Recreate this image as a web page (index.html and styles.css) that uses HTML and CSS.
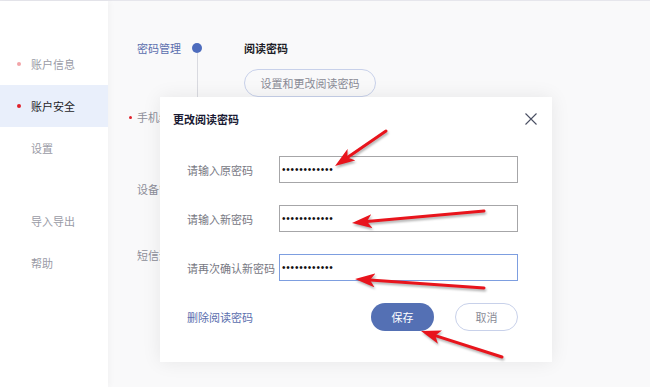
FILE: index.html
```html
<!DOCTYPE html>
<html lang="zh-CN">
  <head>
    <meta charset="UTF-8" />
    <meta name="viewport" content="width=device-width, initial-scale=1.0" />
    <title>账户安全 - 阅读密码</title>
    <link rel="stylesheet" href="styles.css">
  </head>
  <body>
    <div class="app">
      <!-- Left navigation -->
      <aside class="sidebar">
        <ul class="nav">
          <li class="nav-item dotted faint">账户信息</li>
          <li class="nav-item dotted active">账户安全</li>
          <li class="nav-item">设置</li>
          <li class="nav-item group-start">导入导出</li>
          <li class="nav-item">帮助</li>
        </ul>
      </aside>

      <!-- Settings content -->
      <main class="main">
        <div class="section section-password">
          <div class="sec-label primary">密码管理</div>
          <div class="sec-axis"><span class="axis-dot"></span><span class="axis-line"></span></div>
          <div class="sec-body">
            <div class="sec-title">阅读密码</div>
            <button class="btn-outline">设置和更改阅读密码</button>
          </div>
        </div>
        <div class="section section-phone">
          <div class="sec-label"><span class="required"></span>手机绑定</div>
          <div class="sec-axis"><span class="axis-dot"></span><span class="axis-line"></span></div>
          <div class="sec-body"></div>
        </div>
        <div class="section section-device">
          <div class="sec-label">设备管理</div>
          <div class="sec-axis"><span class="axis-dot"></span><span class="axis-line"></span></div>
          <div class="sec-body"></div>
        </div>
        <div class="section section-sms">
          <div class="sec-label">短信通知</div>
          <div class="sec-axis"><span class="axis-dot"></span></div>
          <div class="sec-body"></div>
        </div>

        <!-- Change password dialog -->
        <div class="modal">
          <div class="modal-header">
            <div class="modal-title">更改阅读密码</div>
            <button class="modal-close" aria-label="关闭">
              <svg width="12" height="12" viewBox="0 0 12 12">
                <path d="M0.5 0.5 L11.5 11.5 M11.5 0.5 L0.5 11.5" stroke="#4a4f63" stroke-width="1.1" fill="none"/>
              </svg>
            </button>
          </div>
          <div class="modal-form">
            <div class="form-row">
              <label class="form-label">请输入原密码</label>
              <div class="form-input"><span class="secret">••••••••••••</span></div>
            </div>
            <div class="form-row">
              <label class="form-label">请输入新密码</label>
              <div class="form-input"><span class="secret">••••••••••••</span></div>
            </div>
            <div class="form-row">
              <label class="form-label">请再次确认新密码</label>
              <div class="form-input focused"><span class="secret">••••••••••••</span></div>
            </div>
          </div>
          <div class="modal-footer">
            <a class="link" href="#">删除阅读密码</a>
            <div class="actions">
              <button class="btn-primary">保存</button>
              <button class="btn-outline btn-small">取消</button>
            </div>
          </div>
        </div>
      </main>
    </div>

    <!-- Red annotation arrows drawn over the screenshot -->
    <svg class="annotations" width="650" height="387" viewBox="0 0 650 387">
      <defs>
        <marker id="head" markerUnits="userSpaceOnUse" markerWidth="20" markerHeight="14" viewBox="0 0 20 14" refX="5" refY="7" orient="auto">
          <path d="M0 0 L20 7 L0 14 L5 7 Z" fill="#e8141c"/>
        </marker>
      </defs>
      <line x1="386" y1="131" x2="347.4" y2="157.5" marker-end="url(#head)"/>
      <line x1="484" y1="211" x2="366.9" y2="221.6" marker-end="url(#head)"/>
      <line x1="484" y1="288" x2="370" y2="280" marker-end="url(#head)"/>
      <line x1="502" y1="357" x2="435.3" y2="335.6" marker-end="url(#head)"/>
    </svg>
  </body>
</html>
```

FILE: styles.css
```css
body {
  margin: 0;
  padding: 0;
  font-family: 'Noto Sans CJK SC', 'Noto Sans', sans-serif;
  font-size: 11px;
  background-color: #f9f9fa;
  overflow: hidden;
}

.app {
  display: flex;
  height: 387px;
  border-top: 1px solid #e6e6ec;
  box-sizing: border-box;
}

/* Sidebar */
.sidebar {
  width: 108px;
  flex-shrink: 0;
  background-color: #ffffff;
  box-shadow: 2px 0 6px rgba(0, 0, 0, 0.03);
  position: relative;
  z-index: 1;
}

.nav {
  list-style: none;
  margin: 0;
  padding: 42px 0 0;
}

.nav-item {
  display: flex;
  align-items: center;
  height: 42px;
  padding-left: 31px;
  color: #9a9ba6;
}

.nav-item.dotted {
  padding-left: 17px;
}

.nav-item.dotted::before {
  content: "";
  width: 4px;
  height: 4px;
  border-radius: 50%;
  background-color: #e0202a;
  margin-right: 10px;
}

.nav-item.faint::before {
  background-color: #f2a4a8;
}

.nav-item.active {
  background-color: #e9effb;
  color: #1e1e28;
}

.nav-item.group-start {
  margin-top: 31px;
}

/* Main area */
.main {
  flex: 1;
  position: relative;
  padding: 39px 0 0 29px;
  color: #8d8e99;
}

.section {
  display: grid;
  grid-template-columns: 50px 20px 1fr;
  align-items: start;
}

.section-password { height: 69px; }
.section-phone { height: 72px; }
.section-device { height: 66px; }
.section-sms { height: 60px; }

.sec-label {
  line-height: 16px;
  white-space: nowrap;
  display: flex;
  align-items: center;
}

.sec-label.primary {
  color: #5b6fae;
}

.required {
  width: 3px;
  height: 3px;
  border-radius: 50%;
  background-color: #e0202a;
  margin-left: -8px;
  margin-right: 5px;
}

.sec-axis {
  display: flex;
  flex-direction: column;
  align-items: center;
  align-self: stretch;
}

.axis-dot {
  width: 10px;
  height: 10px;
  border-radius: 50%;
  background-color: #4d6cbd;
  margin-top: 3px;
  flex-shrink: 0;
}

.axis-line {
  flex: 1;
  width: 1px;
  background-color: #d9dae0;
}

.sec-body {
  padding-left: 37px;
}

.sec-title {
  color: #1e1e28;
  font-weight: 700;
  line-height: 16px;
}

.btn-outline {
  font-family: inherit;
  font-size: 11px;
  color: #8a8b96;
  background: transparent;
  border: 1px solid #c8d1ea;
  border-radius: 14px;
  height: 28px;
  width: 132px;
  margin-top: 13px;
  padding: 0;
}

/* Dialog */
.modal {
  position: absolute;
  left: 52px;
  top: 96px;
  width: 392px;
  height: 265px;
  background-color: #ffffff;
  box-shadow: 0 0 18px rgba(0, 0, 0, 0.08);
  display: flex;
  flex-direction: column;
  padding: 14px 34px 0 27px;
  box-sizing: border-box;
}

.modal-header {
  display: flex;
  justify-content: space-between;
  align-items: center;
  margin-left: -14px;
  margin-right: -19px;
}

.modal-title {
  color: #1a1a33;
  font-weight: 700;
  line-height: 16px;
}

.modal-close {
  border: none;
  background: none;
  padding: 0;
  width: 12px;
  height: 12px;
  display: flex;
}

.modal-form {
  display: flex;
  flex-direction: column;
  gap: 22px;
  margin-top: 29px;
}

.form-row {
  display: flex;
  align-items: center;
}

.form-label {
  width: 92px;
  flex-shrink: 0;
  color: #777883;
}

.form-input {
  flex: 1;
  height: 27px;
  border: 1px solid #a6a6a8;
  box-sizing: border-box;
  display: flex;
  align-items: center;
  padding-left: 2px;
}

.form-input.focused {
  border-color: #7d9ee0;
}

.secret {
  font-family: 'Liberation Sans', sans-serif;
  font-size: 10px;
  letter-spacing: 0.8px;
  color: #111111;
}

.modal-footer {
  display: flex;
  justify-content: space-between;
  align-items: center;
  margin-top: 22px;
}

.link {
  color: #5b6fae;
  text-decoration: none;
}

.actions {
  display: flex;
  gap: 21px;
}

.btn-primary {
  font-family: inherit;
  font-size: 11px;
  color: #ffffff;
  background-color: #5470b4;
  border: none;
  border-radius: 14px;
  width: 63px;
  height: 28px;
  padding: 0;
}

.btn-outline.btn-small {
  width: 63px;
  margin-top: 0;
  background-color: #ffffff;
}

/* Annotation arrows */
.annotations {
  position: absolute;
  top: 0;
  left: 0;
  pointer-events: none;
  filter: drop-shadow(1px 2px 1px rgba(0, 0, 0, 0.3));
}

.annotations line {
  stroke: #e8141c;
  stroke-width: 3;
  stroke-linecap: round;
}
```
